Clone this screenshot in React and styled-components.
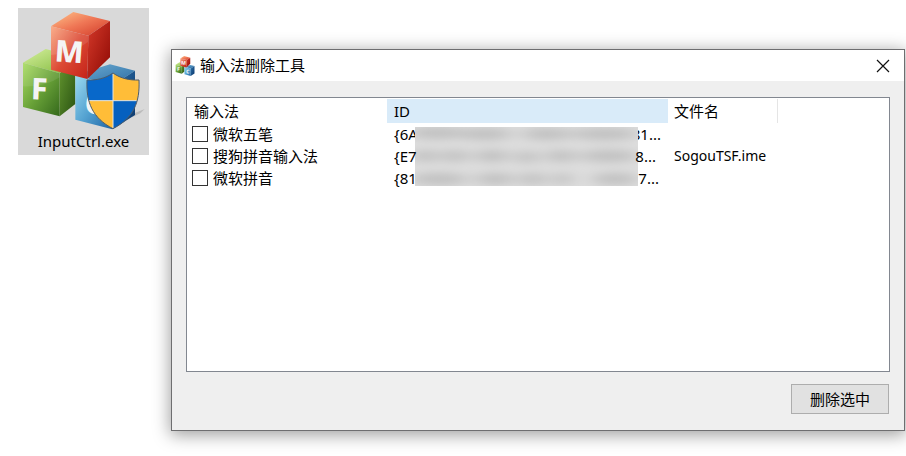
import React, { useId } from "react";
import styled, { createGlobalStyle } from "styled-components";

const GlobalStyle = createGlobalStyle`
  *, *::before, *::after { box-sizing: border-box; }
  body {
    margin: 0;
    background: #fff;
    color: #000;
    font: 15px/22px "Noto Sans", "Noto Sans CJK SC", sans-serif;
    overflow: hidden;
  }
`;

const Desktop = styled.main`
  display: flex;
  align-items: flex-start;
  gap: 22px;
  padding: 8px 1px 25px 18px;
`;

const Shortcut = styled.button`
  display: flex;
  flex: none;
  flex-direction: column;
  align-items: center;
  width: 131px;
  padding: 2px 0 3px;
  border: 0;
  background: #d9d9d9;
  color: #000;
  font: inherit;
`;

const ShortcutArt = styled.svg`
  display: block;
  width: 125px;
  height: 120px;
`;

const Dialog = styled.section`
  flex: 1;
  min-width: 0;
  margin-top: 41px;
  border: 1px solid #6e6e70;
  background: #efefef;
  box-shadow: 0 3px 16px 1px rgba(0, 0, 0, 0.38);
`;

const TitleBar = styled.header`
  display: flex;
  align-items: center;
  gap: 5px;
  height: 31px;
  padding: 0 3px;
  background: #fff;
`;

const TitleArt = styled.svg`
  flex: none;
  width: 20px;
  height: 20px;
`;

const Title = styled.h1`
  flex: 1;
  margin: 0;
  padding-bottom: 2px;
  font-size: 15px;
  font-weight: 400;
`;

const CloseButton = styled.button`
  display: grid;
  place-items: center;
  width: 36px;
  height: 30px;
  padding: 0;
  border: 0;
  background: transparent;
`;

const DialogBody = styled.div`
  display: flex;
  flex-direction: column;
  gap: 12px;
  padding: 16px 14px 16px;
`;

const ListView = styled.div`
  min-height: 275px;
  padding: 1px 0;
  border: 1px solid #828790;
  background: #fff;
`;

const Table = styled.table`
  width: 591px;
  table-layout: fixed;
  border-collapse: separate;
  border-spacing: 0;
`;

const Column = styled.col`
  width: ${(p) => p.$width}px;
`;

const HeadCell = styled.th`
  height: 24px;
  padding: 0 ${(p) => (p.$last ? 6 : 7)}px;
  border-right: 1px solid ${(p) => (p.$last ? "#e5e5e5" : "transparent")};
  background: ${(p) => (p.$hot ? "#d9ebf9" : "transparent")};
  font-weight: 400;
  text-align: left;
`;

const Cell = styled.td`
  height: 22px;
  padding: 0 7px;
  white-space: nowrap;
`;

const NameCell = styled(Cell)`
  padding: 0 5px;
`;

const FileCell = styled(Cell)`
  padding: 0 6px;
  font-size: 14px;
`;

const CheckLabel = styled.label`
  display: flex;
  align-items: center;
  gap: 5px;
`;

const CheckBox = styled.input`
  appearance: none;
  width: 16px;
  height: 16px;
  margin: 0;
  border: 1px solid #333;
  background: #fff;

  &:checked { background: #333; }
`;

const IdText = styled.div`
  position: relative;
  display: flex;
  justify-content: space-between;
  padding-right: ${(p) => p.$inset}px;
`;

const Redaction = styled.span`
  position: absolute;
  top: 4px;
  left: 21px;
  width: 223px;
  height: 59px;
  overflow: hidden;
  background: #dedede;
`;

const Smudge = styled.svg`
  display: block;
  width: 100%;
  height: 100%;
`;

const DeleteButton = styled.button`
  align-self: flex-end;
  width: 98px;
  height: 30px;
  margin-right: 1px;
  padding: 0;
  border: 1px solid #adadad;
  background: #e1e1e1;
  color: #000;
  font: inherit;
`;

function Cubes({ as: Art, shield }) {
  const id = useId().replace(/[^a-zA-Z0-9]/g, "");
  const fill = (name) => `url(#${id}${name})`;
  const gradient = (name, from, to, mid) => (
    <linearGradient id={id + name} x1="0" y1="0" x2="1" y2="1">
      <stop offset="0" stopColor={from} />
      {mid && <stop offset="0.5" stopColor={mid} />}
      <stop offset="1" stopColor={to} />
    </linearGradient>
  );
  const letter = {
    fontFamily: "Noto Sans, sans-serif",
    fontWeight: 800,
    fill: "#f4f4f4",
  };
  return (
    <Art viewBox={shield ? "33 30 375 360" : "36 34 340 356"} aria-hidden="true">
      <defs>
        {gradient("rt", "#ffc48a", "#d13a28", "#ef7655")}
        {gradient("rl", "#f9a57e", "#c42218", "#dc4a35")}
        {gradient("rr", "#d63a2a", "#8d0904")}
        {gradient("gt", "#d5ef9d", "#7fb83a")}
        {gradient("gl", "#a9dc62", "#35691c", "#69a238")}
        {gradient("gr", "#63962f", "#2a5312")}
        {gradient("bt", "#6fadd2", "#2a6ca4")}
        {gradient("bl", "#9bdaf0", "#1e64a4", "#56a4d2")}
        {gradient("br", "#2b70aa", "#0c376b")}
      </defs>
      {shield && <path d="M360 345L404 327L391 340L366 352Z" fill="#bcbcbc" />}
      <path d="M107 147L196 170L149 220L39 188Z" fill={fill("gt")} />
      <path d="M39 188L149 220V349L39 321Z" fill={fill("gl")} />
      <path d="M149 220L196 180V312L149 349Z" fill={fill("gr")} />
      <path d="M39 259Q105 262 149 232V220L39 188Z" fill="#fff" opacity="0.09" />
      <path d="M300 193L375 212L307 256L196 225Z" fill={fill("bt")} />
      <path d="M196 225L307 256V388L196 359Z" fill={fill("bl")} />
      <path d="M307 256L375 212V345L307 388Z" fill={fill("br")} />
      <text x="222" y="340" fontSize="92" transform="rotate(4 222 340)" {...letter}>C</text>
      <path d="M190 36L300 63L235 107L123 79Z" fill={fill("rt")} />
      <path d="M123 79L235 107L232 237L123 209Z" fill={fill("rl")} />
      <path d="M235 107L300 63V172L232 237Z" fill={fill("rr")} />
      <path d="M123 165Q190 160 234 126V107L123 79Z" fill="#fff" opacity="0.1" />
      <text x="133" y="184" fontSize="90" transform="rotate(4 133 184)" {...letter}>M</text>
      <text x="62" y="298" fontSize="90" transform="rotate(2 62 298)" {...letter}>F</text>
      {shield && (
        <g>
          <clipPath id={id + "shield"}>
            <path d="M309 219C286 236 258 241 231 240C228 307 247 354 309 386C371 354 390 307 387 240C360 241 332 236 309 219Z" />
          </clipPath>
          <g clipPath={fill("shield")}>
            <path d="M225 210H309V302H225Z" fill="#0868ca" />
            <path d="M309 210H393V302H309Z" fill="#ffbd38" />
            <path d="M225 302H309V390H225Z" fill="#ffbd38" />
            <path d="M309 302H393V390H309Z" fill="#0560bf" />
            <path d="M309 215V390M225 302H393" stroke="#e6e5df" strokeWidth="3" />
          </g>
          <path
            d="M309 219C286 236 258 241 231 240C228 307 247 354 309 386C371 354 390 307 387 240C360 241 332 236 309 219Z"
            fill="none"
            stroke="#4e5c68"
            strokeWidth="3"
          />
        </g>
      )}
    </Art>
  );
}

const smudges = [
  [22, 6, 30], [70, 7, 28], [132, 7, 26], [190, 7, 34],
  [10, 29, 14], [40, 29, 14], [77, 29, 18], [112, 30, 12], [146, 29, 16], [194, 29, 30],
  [24, 52, 30], [80, 52, 20], [118, 52, 14], [148, 52, 10], [200, 52, 24],
];

function RedactedArea() {
  return (
    <Redaction>
      <Smudge viewBox="0 0 223 59" aria-hidden="true">
        <filter id="smudge" x="-20%" y="-50%" width="140%" height="200%">
          <feGaussianBlur stdDeviation="9 5" />
        </filter>
        <g filter="url(#smudge)" fill="#bfbfbf">
          {smudges.map(([x, y, r]) => (
            <ellipse key={`${x}-${y}`} cx={x} cy={y} rx={r} ry="6" />
          ))}
        </g>
      </Smudge>
    </Redaction>
  );
}

const methods = [
  { name: "微软五笔", idStart: "{6A", idEnd: "81...", inset: 0, file: "" },
  { name: "搜狗拼音输入法", idStart: "{E7", idEnd: "8...", inset: 5, file: "SogouTSF.ime" },
  { name: "微软拼音", idStart: "{81", idEnd: "7...", inset: 2, file: "" },
];

export default function App() {
  return (
    <>
      <GlobalStyle />
      <Desktop>
        <Shortcut type="button">
          <Cubes as={ShortcutArt} shield />
          InputCtrl.exe
        </Shortcut>
        <Dialog role="dialog" aria-labelledby="dialog-title">
          <TitleBar>
            <Cubes as={TitleArt} />
            <Title id="dialog-title">输入法删除工具</Title>
            <CloseButton type="button" aria-label="关闭">
              <svg width="14" height="14" viewBox="0 0 14 14" aria-hidden="true">
                <path d="M1 1L13 13M13 1L1 13" stroke="#111" strokeWidth="1.2" />
              </svg>
            </CloseButton>
          </TitleBar>
          <DialogBody>
            <ListView>
              <Table>
                <colgroup>
                  <Column $width={200} />
                  <Column $width={281} />
                  <Column $width={110} />
                </colgroup>
                <thead>
                  <tr>
                    <HeadCell scope="col">输入法</HeadCell>
                    <HeadCell scope="col" $hot>ID</HeadCell>
                    <HeadCell scope="col" $last>文件名</HeadCell>
                  </tr>
                </thead>
                <tbody>
                  {methods.map((m, i) => (
                    <tr key={m.name}>
                      <NameCell>
                        <CheckLabel>
                          <CheckBox type="checkbox" />
                          {m.name}
                        </CheckLabel>
                      </NameCell>
                      <Cell>
                        <IdText $inset={m.inset}>
                          <span>{m.idStart}</span>
                          <span>{m.idEnd}</span>
                          {i === 0 && <RedactedArea />}
                        </IdText>
                      </Cell>
                      <FileCell>{m.file}</FileCell>
                    </tr>
                  ))}
                </tbody>
              </Table>
            </ListView>
            <DeleteButton type="button">删除选中</DeleteButton>
          </DialogBody>
        </Dialog>
      </Desktop>
    </>
  );
}
